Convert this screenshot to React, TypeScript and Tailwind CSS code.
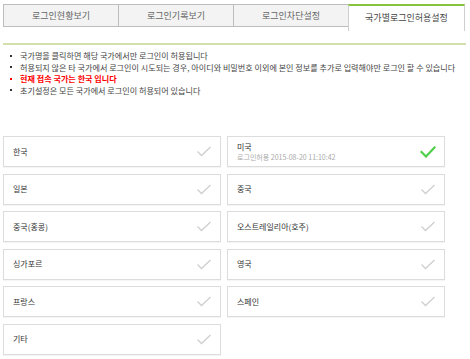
import React from "react";

const font = { fontFamily: '"Noto Sans CJK KR", "Noto Sans", sans-serif' };

function Check({ on }: { on?: boolean }) {
  if (on) {
    return (
      <svg width="16" height="12" viewBox="0 0 16 12" className="shrink-0">
        <path d="M1.5 6 L6 10.5 L14.5 1.5" fill="none" stroke="#4fcf4a" strokeWidth="2.2" strokeLinecap="square" />
      </svg>
    );
  }
  return (
    <svg width="16" height="11" viewBox="0 0 16 11" className="shrink-0">
      <path d="M1.5 5.5 L5.5 9.5 L14.5 1" fill="none" stroke="#cfcfcf" strokeWidth="1.3" />
    </svg>
  );
}

const countries: { name: string; on?: boolean; sub?: string }[] = [
  { name: "한국" },
  { name: "미국", on: true, sub: "로그인허용 2015-08-20 11:10:42" },
  { name: "일본" },
  { name: "중국" },
  { name: "중국(홍콩)" },
  { name: "오스트레일리아(호주)" },
  { name: "싱가포르" },
  { name: "영국" },
  { name: "프랑스" },
  { name: "스페인" },
  { name: "기타" },
];

export default function App() {
  const tabs = ["로그인현황보기", "로그인기록보기", "로그인차단설정"];
  return (
    <div className="w-[470px] h-[359px] bg-white overflow-hidden" style={font}>
      <div className="flex pl-[3px] pt-[4px] items-start">
        {tabs.map((t, i) => (
          <div
            key={t}
            className={`w-[116px] h-[23px] border border-[#bdbdbd] bg-[#f3f3f3] flex items-center justify-center text-[9px] text-[#666] ${i > 0 ? "-ml-px" : ""}`}
          >
            {t}
          </div>
        ))}
        <div className="w-[117px] h-[27px] -ml-px border-t-2 border-t-[#86c440] border-x border-x-[#cfcfcf] bg-white flex items-center justify-center text-[9px] text-[#444] pb-[2px]">
          국가별로그인허용설정
        </div>
      </div>
      <div className="mx-[3px] mt-[12px] w-[463px] h-[2px] bg-[#d3e0ae]" />
      <ul className="mt-[5px] pl-[10px] text-[8.1px] leading-[11.5px] text-[#444]">
        {[
          { t: "국가명을 클릭하면 해당 국가에서만 로그인이 허용됩니다" },
          { t: "허용되지 않은 타 국가에서 로그인이 시도되는 경우, 아이디와 비밀번호 이외에 본인 정보를 추가로 입력해야만 로그인 할 수 있습니다" },
          { t: "현재 접속 국가는 한국 입니다", red: true },
          { t: "초기설정은 모든 국가에서 로그인이 허용되어 있습니다" },
        ].map((l) => (
          <li key={l.t} className={`flex items-center ${l.red ? "text-[#ff0000] font-bold" : ""}`}>
            <span className={`w-[2px] h-[2px] mr-[8px] ${l.red ? "bg-[#ff0000]" : "bg-[#333]"}`} />
            <span className="whitespace-nowrap">{l.t}</span>
          </li>
        ))}
      </ul>
      <div className="mt-[40px] ml-[3px] grid grid-cols-[218px_218px] gap-x-[6px] gap-y-[6.5px]">
        {countries.map((c) => (
          <div
            key={c.name}
            className="h-[31px] border border-[#dcdcdc] shadow-[0_1px_1px_rgba(0,0,0,0.04)] bg-white flex items-center justify-between pl-[9px] pr-[8px]"
          >
            <div className="flex flex-col">
              <span className="text-[8px] leading-[10px] text-[#333]">{c.name}</span>
              {c.sub && <span className="text-[7px] leading-[10px] text-[#aaa]">{c.sub}</span>}
            </div>
            <Check on={c.on} />
          </div>
        ))}
      </div>
    </div>
  );
}
